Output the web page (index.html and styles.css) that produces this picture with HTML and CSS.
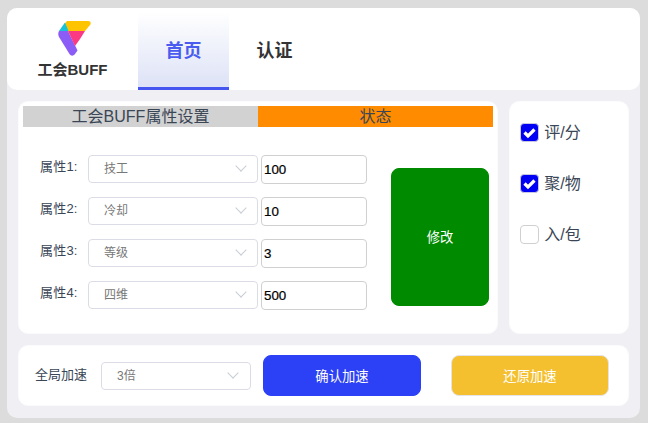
FILE: index.html
```html
<!DOCTYPE html>
<html lang="zh">
<head>
    <meta charset="UTF-8">
    <title>工会BUFF</title>
    <link rel="stylesheet" href="styles.css">
</head>
<body>

<div class="window">
    <header class="topbar">
        <div class="brand">
            <svg class="logo" width="33" height="35" viewBox="0 0 33 35">
                <path d="M9 0H30C32.5 0 33.5 2 32 4L27 10H10L6.5 3Z" fill="#ffc400"/>
                <path d="M7 1.5L10.5 10H1Z" fill="#17c3d8"/>
                <path d="M1 10H10L19.5 29.5 17 33C15 35.5 13 35 11.5 33L1 16C0 14 0 12 1 10Z" fill="#8b5cf6"/>
                <path d="M10 10H27L22 18 17 25Z" fill="#fb3a83"/>
            </svg>
            <span class="brand-name">工会BUFF</span>
        </div>
        <a class="tab active">首页</a>
        <a class="tab">认证</a>
    </header>

    <div class="middle">
        <section class="card settings">
            <div class="settings-head">
                <div class="head-title">工会BUFF属性设置</div>
                <div class="head-state">状态</div>
            </div>
            <div class="settings-body">
                <div class="rows">
                    <div class="row">
                        <span class="row-label">属性1:</span>
                        <div class="select attr-select"><span>技工</span><i class="arrow"></i></div>
                        <input class="num" type="text" value="100">
                    </div>
                    <div class="row">
                        <span class="row-label">属性2:</span>
                        <div class="select attr-select"><span>冷却</span><i class="arrow"></i></div>
                        <input class="num" type="text" value="10">
                    </div>
                    <div class="row">
                        <span class="row-label">属性3:</span>
                        <div class="select attr-select"><span>等级</span><i class="arrow"></i></div>
                        <input class="num" type="text" value="3">
                    </div>
                    <div class="row">
                        <span class="row-label">属性4:</span>
                        <div class="select attr-select"><span>四维</span><i class="arrow"></i></div>
                        <input class="num" type="text" value="500">
                    </div>
                </div>
                <button class="btn btn-edit">修改</button>
            </div>
        </section>

        <aside class="card side">
            <label class="check"><input type="checkbox" checked><span>评/分</span></label>
            <label class="check"><input type="checkbox" checked><span>聚/物</span></label>
            <label class="check"><input type="checkbox"><span>入/包</span></label>
        </aside>
    </div>

    <footer class="card bottom">
        <span class="bottom-label">全局加速</span>
        <div class="select speed-select"><span>3倍</span><i class="arrow"></i></div>
        <button class="btn btn-confirm">确认加速</button>
        <button class="btn btn-restore">还原加速</button>
    </footer>
</div>

</body>
</html>
```

FILE: styles.css
```css
* {
    box-sizing: border-box;
}

body {
    margin: 0;
    height: 423px;
    padding: 8px 8px 5px 7px;
    background-color: #dcdcdc;
    font-family: "Liberation Sans", "Noto Sans CJK SC", sans-serif;
    color: #3a4656;
    overflow: hidden;
}

.window {
    height: 410px;
    background-color: #efeff4;
    border-radius: 10px;
}

.topbar {
    display: flex;
    height: 82px;
    background-color: #fff;
    border-radius: 10px;
}

.brand {
    width: 131px;
    display: flex;
    flex-direction: column;
    align-items: center;
    padding-top: 13px;
}

.logo {
    display: block;
    margin-left: 4px;
}

.brand-name {
    margin-top: 4px;
    font-size: 15px;
    line-height: 20px;
    font-weight: 700;
    color: #333;
}

.tab {
    width: 91px;
    margin-top: 4px;
    display: flex;
    align-items: center;
    justify-content: center;
    padding-bottom: 5px;
    font-size: 18px;
    font-weight: 700;
    color: #333;
}

.tab.active {
    color: #4a5cf0;
    background: linear-gradient(#fff, #dde2f6);
    border-bottom: 3px solid #4455f0;
    padding-bottom: 2px;
}

.card {
    background-color: #fff;
    border-radius: 10px;
    border: 1px solid #fbfbfd;
}

.middle {
    display: flex;
    gap: 11px;
    margin: 11px 11px 0;
}

.settings {
    width: 481px;
    height: 233px;
    padding: 4px;
}

.settings-head {
    display: flex;
    height: 21px;
    font-size: 16px;
    line-height: 21px;
    text-align: center;
}

.head-title {
    width: 235px;
    background-color: #d2d2d2;
}

.head-state {
    flex: 1;
    background-color: #ff8c00;
}

.settings-body {
    display: flex;
    padding: 28px 0 0 17px;
}

.rows {
    display: flex;
    flex-direction: column;
    gap: 13px;
}

.row {
    display: flex;
    height: 29px;
}

.row-label {
    width: 48px;
    font-size: 13px;
    line-height: 24px;
    letter-spacing: .2px;
    white-space: nowrap;
}

.select {
    display: flex;
    align-items: center;
    justify-content: space-between;
    height: 28px;
    background-color: #fff;
    border: 1px solid #dcdce6;
    border-radius: 4px;
    font-size: 12px;
    color: #777;
}

.select span {
    margin-bottom: 3px;
}

.attr-select {
    width: 170px;
    padding: 0 12px 0 15px;
}

.arrow {
    width: 8px;
    height: 8px;
    margin-bottom: 6px;
    border-right: 1px solid #c8ccd4;
    border-bottom: 1px solid #c8ccd4;
    transform: rotate(45deg);
}

.num {
    width: 106px;
    height: 29px;
    margin-left: 3px;
    padding: 0 2px;
    border: 1px solid #d0d0d0;
    border-radius: 4px;
    font-family: "Liberation Sans", sans-serif;
    font-size: 13.33px;
    color: #000;
    -webkit-text-stroke: .2px #000;
}

.btn {
    border: 1px solid #e4e4e8;
    color: #fff;
    font-family: inherit;
    font-size: 13.33px;
    font-weight: 400;
    padding: 0 0 1px;
}

.btn-edit {
    width: 98px;
    height: 138px;
    margin: 13px 0 0 24px;
    background-color: #008a00;
    border-color: #008a00;
    border-radius: 8px;
}

.side {
    width: 120px;
    height: 233px;
    padding: 20px 0 0 10px;
    display: flex;
    flex-direction: column;
    gap: 31px;
}

.check {
    display: flex;
    align-items: center;
    height: 20px;
    font-size: 16px;
}

.check span {
    margin-bottom: 2px;
}

.check input {
    appearance: none;
    width: 19px;
    height: 19px;
    margin: 0 5px 0 0;
    background-color: #fff;
    border: 1px solid #d0d0d0;
    border-radius: 4px;
}

.check input:checked {
    background-color: #0000f5;
    border-color: #c8c8e0;
    background-image: url("data:image/svg+xml,%3Csvg xmlns='http://www.w3.org/2000/svg' viewBox='0 0 17 17'%3E%3Cpath d='M3.5 8.5L7 12L13.5 5.5' fill='none' stroke='white' stroke-width='3.2'/%3E%3C/svg%3E");
}

.bottom {
    display: flex;
    align-items: center;
    height: 61px;
    margin: 11px 11px 0;
    padding-left: 16px;
}

.bottom-label {
    width: 66px;
    margin-bottom: 4px;
    font-size: 13px;
}

.speed-select {
    width: 150px;
    padding: 0 13px 0 15px;
}

.btn-confirm,
.btn-restore {
    width: 158px;
    height: 41px;
    border-radius: 8px;
}

.btn-confirm {
    margin-left: 12px;
    background-color: #2c40f5;
    border-color: #2c40f5;
}

.btn-restore {
    margin-left: 30px;
    background-color: #f4c030;
}
```
